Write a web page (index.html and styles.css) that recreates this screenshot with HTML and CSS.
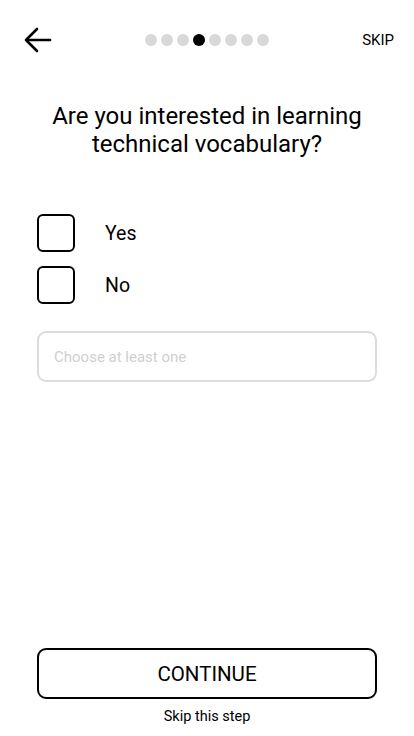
FILE: index.html
```html
<!DOCTYPE html>
<html>
<head>
<meta charset="utf-8">
<link rel="stylesheet" href="styles.css">
</head>
<body>
<div class="screen">
  <header class="topbar">
    <svg class="back" width="28" height="26" viewBox="0 0 28 26" fill="none" stroke="#000" stroke-width="2.6" stroke-linecap="round" stroke-linejoin="round">
      <path d="M26 13H3"/>
      <path d="M13 2L2 13l11 11"/>
    </svg>
    <div class="dots">
      <span class="dot"></span><span class="dot"></span><span class="dot"></span><span class="dot active"></span><span class="dot"></span><span class="dot"></span><span class="dot"></span><span class="dot"></span>
    </div>
    <span class="skip">SKIP</span>
  </header>
  <h1 class="title">Are you interested in learning technical vocabulary?</h1>
  <div class="options">
    <label class="option"><span class="box"></span><span class="label">Yes</span></label>
    <label class="option"><span class="box"></span><span class="label">No</span></label>
  </div>
  <div class="field">Choose at least one</div>
  <div class="spacer"></div>
  <button class="continue">CONTINUE</button>
  <div class="skipstep">Skip this step</div>
</div>
</body>
</html>
```
FILE: styles.css
```css
* { box-sizing: border-box; }
html, body { margin: 0; padding: 0; background: #fff; }
body { font-family: Roboto, "Noto Sans", sans-serif; color: #000; }
.screen { width: 414px; height: 736px; display: flex; flex-direction: column; padding: 0 37px; }
.topbar { height: 80px; display: grid; grid-template-columns: 1fr auto 1fr; align-items: center; margin: 0 -17px 0 -13px; }
.back { display: block; }
.dots { display: flex; gap: 4px; margin-left: -4px; }
.dot { width: 12px; height: 12px; border-radius: 50%; background: #d9d9d9; }
.dot.active { background: #000; }
.skip { justify-self: end; font-size: 15px; }
.title { margin: 22px 0 0; font-size: 24px; font-weight: 400; line-height: 28px; text-align: center; padding: 0 4px; }
.options { margin-top: 56px; display: flex; flex-direction: column; gap: 14px; }
.option { display: flex; align-items: center; gap: 30px; }
.box { width: 38px; height: 38px; border: 2px solid #000; border-radius: 6px; }
.label { font-size: 19.5px; }
.field { margin-top: 27px; height: 51px; border: 2px solid #dcdcdc; border-radius: 9px; display: flex; align-items: center; padding: 0 15px; font-size: 15px; color: #cfcfcf; }
.spacer { flex: 1; }
.continue { height: 51px; width: 100%; background: #fff; border: 2px solid #000; border-radius: 9px; font-family: inherit; font-size: 20.5px; color: #000; padding: 0; }
.skipstep { text-align: center; font-size: 14.5px; margin-top: 10px; margin-bottom: 11px; line-height: 16px; }
```
